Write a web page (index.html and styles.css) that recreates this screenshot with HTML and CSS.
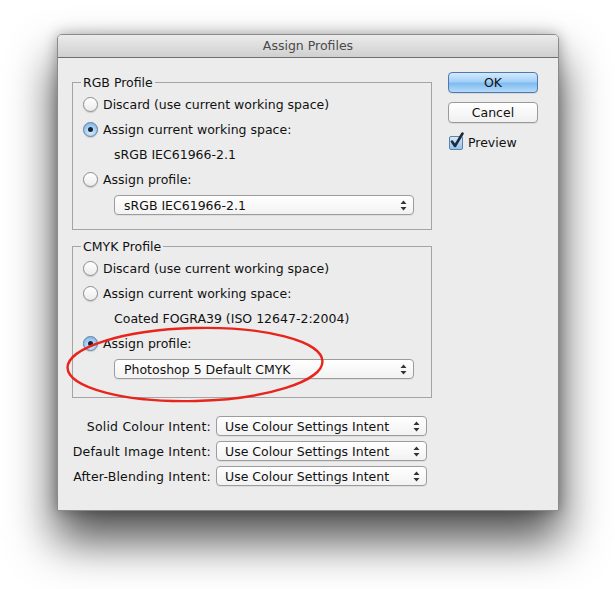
FILE: index.html
```html
<!DOCTYPE html>
<html lang="en">
<head>
  <meta charset="UTF-8" />
  <title>Assign Profiles</title>
  <link rel="stylesheet" href="styles.css">
</head>
<body>

  <div class="window">
    <div class="titlebar">Assign Profiles</div>

    <div class="content">
      <div class="main">

        <fieldset class="group rgb">
          <legend>RGB Profile</legend>
          <div class="row"><span class="radio"></span>Discard (use current working space)</div>
          <div class="row"><span class="radio on"></span>Assign current working space:</div>
          <div class="row sub">sRGB IEC61966-2.1</div>
          <div class="row"><span class="radio"></span>Assign profile:</div>
          <div class="popup wide">
            sRGB IEC61966-2.1
            <svg class="stepper" width="7" height="11" viewBox="0 0 7 11"><path d="M3.5 0.5 L6.5 4 L0.5 4 Z M3.5 10.5 L6.5 7 L0.5 7 Z" fill="#333"/></svg>
          </div>
        </fieldset>

        <fieldset class="group cmyk">
          <legend>CMYK Profile</legend>
          <div class="row"><span class="radio"></span>Discard (use current working space)</div>
          <div class="row"><span class="radio"></span>Assign current working space:</div>
          <div class="row sub">Coated FOGRA39 (ISO 12647-2:2004)</div>
          <div class="row"><span class="radio on"></span>Assign profile:</div>
          <div class="popup wide">
            Photoshop 5 Default CMYK
            <svg class="stepper" width="7" height="11" viewBox="0 0 7 11"><path d="M3.5 0.5 L6.5 4 L0.5 4 Z M3.5 10.5 L6.5 7 L0.5 7 Z" fill="#333"/></svg>
          </div>
        </fieldset>

        <div class="intents">
          <div class="intent">
            <span class="label">Solid Colour Intent:</span>
            <div class="popup">
              Use Colour Settings Intent
              <svg class="stepper" width="7" height="11" viewBox="0 0 7 11"><path d="M3.5 0.5 L6.5 4 L0.5 4 Z M3.5 10.5 L6.5 7 L0.5 7 Z" fill="#333"/></svg>
            </div>
          </div>
          <div class="intent">
            <span class="label">Default Image Intent:</span>
            <div class="popup">
              Use Colour Settings Intent
              <svg class="stepper" width="7" height="11" viewBox="0 0 7 11"><path d="M3.5 0.5 L6.5 4 L0.5 4 Z M3.5 10.5 L6.5 7 L0.5 7 Z" fill="#333"/></svg>
            </div>
          </div>
          <div class="intent">
            <span class="label">After-Blending Intent:</span>
            <div class="popup">
              Use Colour Settings Intent
              <svg class="stepper" width="7" height="11" viewBox="0 0 7 11"><path d="M3.5 0.5 L6.5 4 L0.5 4 Z M3.5 10.5 L6.5 7 L0.5 7 Z" fill="#333"/></svg>
            </div>
          </div>
        </div>

      </div>

      <div class="side">
        <button class="btn default">OK</button>
        <button class="btn">Cancel</button>
        <div class="check">
          <span class="checkbox">
            <svg width="16" height="18" viewBox="0 0 16 18"><path d="M3 9.5 L6 14 L13.5 1.5" fill="none" stroke="#1e2a3a" stroke-width="2.6" stroke-linecap="round" stroke-linejoin="round"/></svg>
          </span>
          Preview
        </div>
      </div>
    </div>

    <!-- red annotation ring -->
    <svg class="annotation" width="500" height="475" viewBox="0 0 500 475">
      <ellipse cx="137" cy="329.5" rx="127.5" ry="36.5" transform="rotate(-1.5 137 329.5)" fill="none" stroke="#e8251c" stroke-width="2.4"/>
    </svg>
  </div>

</body>
</html>
```

FILE: styles.css
```css
* {
  box-sizing: border-box;
}

html {
  background-color: #ffffff;
}

body {
  margin: 0;
  min-height: 589px;
  padding: 34px 0 0 57px;
  font-family: 'DejaVu Sans', sans-serif;
  font-size: 12px;
  color: #111;
}

.window {
  position: relative;
  width: 502px;
  height: 477px;
  background-color: #ececec;
  border: 1px solid #8a8a8a;
  border-radius: 5px 5px 0 0;
  box-shadow: 0 28px 46px 2px rgba(0, 0, 0, 0.68), 0 0 14px rgba(0, 0, 0, 0.3);
}

.titlebar {
  height: 23px;
  line-height: 22px;
  text-align: center;
  color: #4a4a4a;
  font-size: 12.5px;
  background: linear-gradient(#ebebeb, #d0d0d0);
  border-bottom: 1px solid #6f6f6f;
  border-radius: 4px 4px 0 0;
}

.content {
  display: flex;
  padding-left: 14px;
}

.main {
  width: 360px;
  padding-top: 17px;
}

.group {
  margin: 0;
  padding: 2px 0 14px 10px;
  border: 1px solid #a4a4a4;
  min-width: 0;
}

.group.cmyk {
  margin-top: 9px;
  padding-bottom: 18px;
}

.group legend {
  margin-left: -2px;
  padding: 0 2px;
  line-height: 15px;
  font-size: 12.5px;
}

.row {
  display: flex;
  align-items: center;
  height: 25px;
  font-size: 12.5px;
}

.row.sub {
  padding-left: 31px;
}

.radio {
  width: 15px;
  height: 15px;
  margin-right: 5px;
  border-radius: 50%;
  border: 1px solid #8d8d8d;
  background: linear-gradient(#ffffff, #ececec);
  box-shadow: 0 1px 1px rgba(0, 0, 0, 0.15);
  display: flex;
  align-items: center;
  justify-content: center;
}

.radio.on {
  border-color: #5e7fa6;
  background: radial-gradient(circle at 50% 70%, #d8ecfb 0%, #9fcbf1 55%, #6fa9dc 100%);
}

.radio.on::after {
  content: '';
  width: 5px;
  height: 5px;
  border-radius: 50%;
  background-color: #1b2530;
}

.popup {
  position: relative;
  display: flex;
  align-items: center;
  height: 20px;
  width: 211px;
  padding-left: 8px;
  font-size: 12.5px;
  border: 1px solid #9c9c9c;
  border-radius: 4px;
  background: linear-gradient(#ffffff, #f2f2f2);
  box-shadow: 0 1px 0 rgba(0, 0, 0, 0.06);
}

.popup.wide {
  width: 300px;
  margin: 3px 0 0 31px;
  padding-left: 9px;
}

.stepper {
  position: absolute;
  right: 6px;
  top: 4px;
}

.intents {
  display: flex;
  flex-direction: column;
  gap: 5px;
  margin-top: 18px;
}

.intent {
  display: flex;
  align-items: center;
}

.label {
  width: 139px;
  margin-right: 5px;
  text-align: right;
  font-size: 12.5px;
  letter-spacing: 0.2px;
}

.side {
  display: flex;
  flex-direction: column;
  align-items: flex-start;
  padding: 14px 0 0 16px;
}

.btn {
  width: 90px;
  height: 21px;
  padding: 0;
  margin-bottom: 9px;
  font-family: 'DejaVu Sans', sans-serif;
  font-size: 12.5px;
  color: #111;
  border: 1px solid #9a9a9a;
  border-radius: 4px;
  background: linear-gradient(#ffffff, #f0f0f0);
  box-shadow: 0 1px 0 rgba(0, 0, 0, 0.08);
}

.btn.default {
  border-color: #4f78ad;
  background: linear-gradient(#d3eafd 0%, #a4d0f7 45%, #80bcf1 55%, #b4dbfb 100%);
}

.check {
  display: flex;
  align-items: center;
  margin-top: 3px;
  font-size: 12.5px;
}

.checkbox {
  position: relative;
  width: 14px;
  height: 14px;
  margin: 0 5px 0 1px;
  border: 1px solid #5e7fa6;
  border-radius: 2px;
  background: linear-gradient(#d3eafd, #8fc3ee);
}

.checkbox svg {
  position: absolute;
  left: -1px;
  top: -5px;
}

.annotation {
  position: absolute;
  left: 0;
  top: 0;
  pointer-events: none;
}
```
